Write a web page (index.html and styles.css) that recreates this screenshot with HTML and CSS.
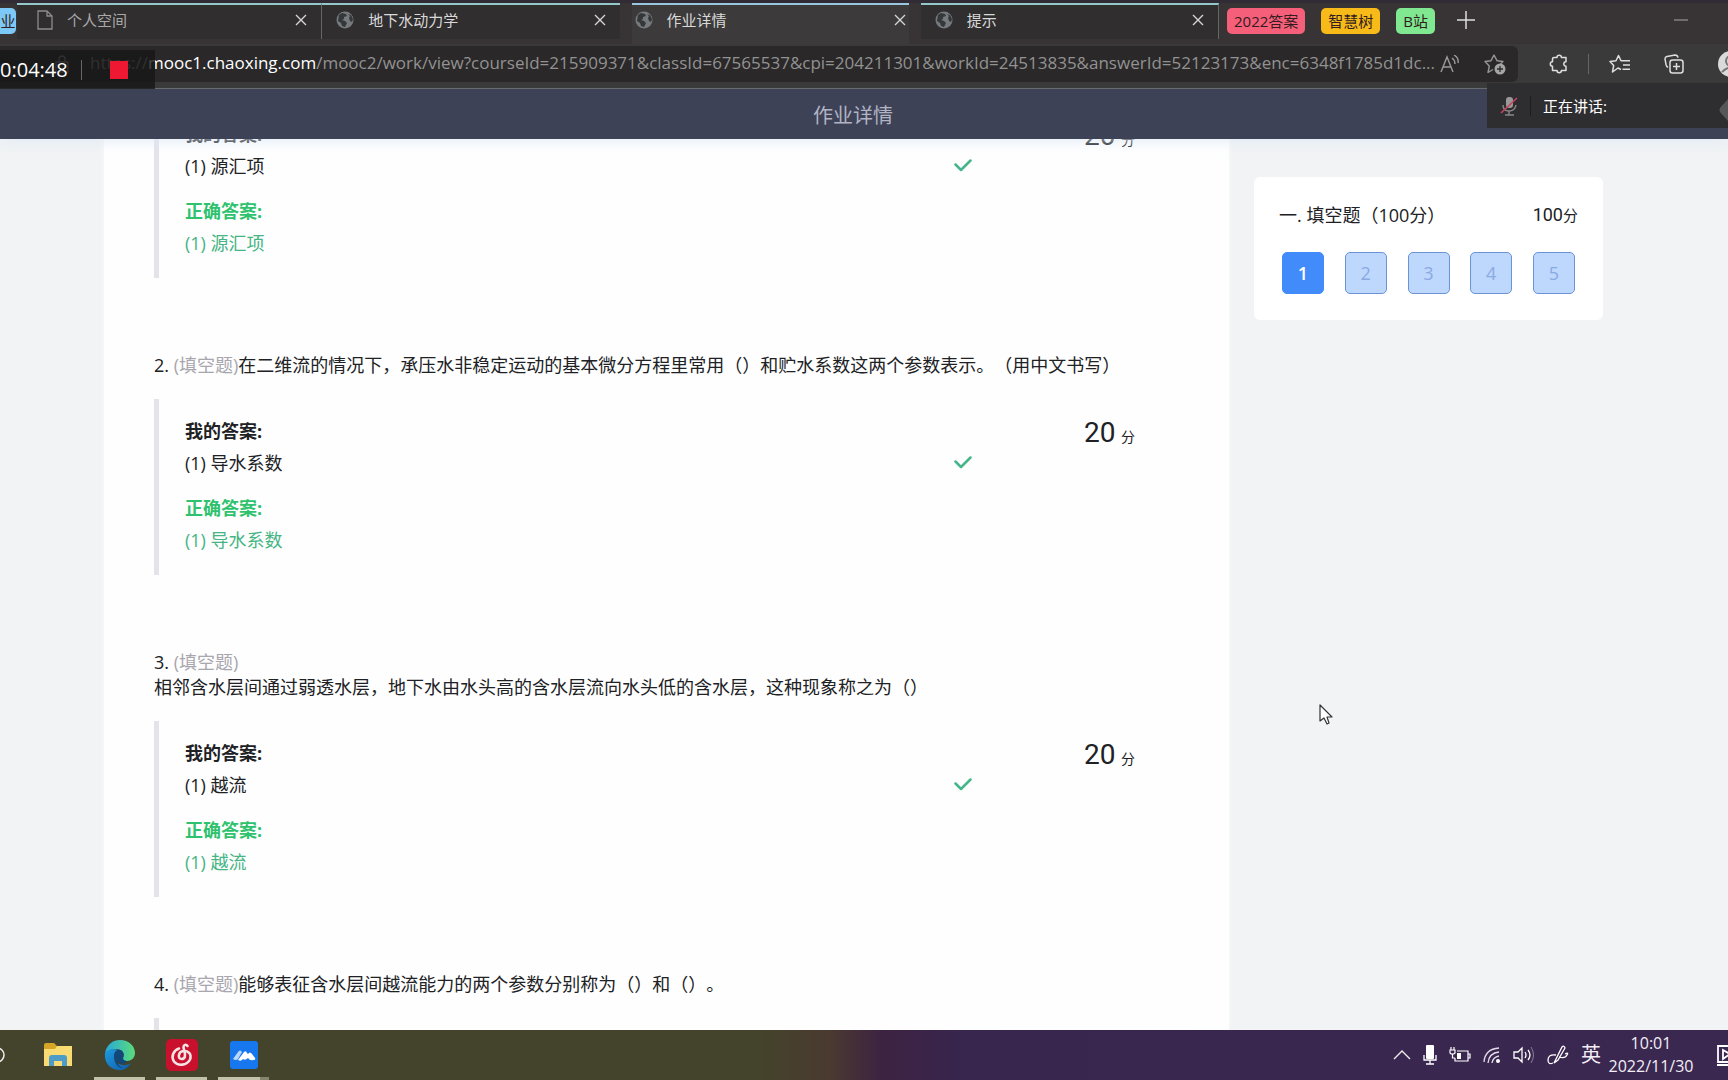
FILE: index.html
```html
<!DOCTYPE html>
<html lang="zh-CN">
<head>
<meta charset="utf-8">
<title>作业详情</title>
<meta name="viewport" content="width=device-width, initial-scale=1">
<link rel="stylesheet" href="styles.css">
</head>
<body>
<svg class="defs" aria-hidden="true">
  <symbol id="globe" viewBox="0 0 18 18"><circle cx="9" cy="9" r="8.5" fill="#777a7c"/><path d="M3 4l3-2 4 1 1 2-3 1v2l-2 1 3 1 2 2-2 4-3-1-1-3-3-2zM12 3l3 1 2 4-1 3-2-1-1-3 1-2z" fill="#35383a"/></symbol>
  <symbol id="close" viewBox="0 0 12 12"><path d="M1 1l10 10M11 1L1 11" stroke="#d6d6d6" stroke-width="1.4" fill="none"/></symbol>
  <symbol id="check" viewBox="0 0 18 13"><path d="M1.5 5.5l5.500 5.500L16.500 1.500" stroke="#45b58a" stroke-width="2.500" fill="none" stroke-linecap="round" stroke-linejoin="round"/></symbol>
</svg>

<div class="browser">
  <div class="tabs">
    <button class="group group-blue">业</button>
    <div class="tab tab-first">
      <svg class="icon-page" viewBox="0 0 16 20"><path d="M1 1h9l5 5v13H1zM10 1v5h5" fill="none" stroke="#8b8d8d" stroke-width="1.300"/></svg>
      <span class="tab-title dim">个人空间</span>
      <button class="tab-close" aria-label="关闭"><svg><use href="#close"/></svg></button>
    </div>
    <div class="tab tab-second">
      <svg class="icon-globe"><use href="#globe"/></svg>
      <span class="tab-title">地下水动力学</span>
      <button class="tab-close" aria-label="关闭"><svg><use href="#close"/></svg></button>
    </div>
    <div class="tab tab-active">
      <svg class="icon-globe"><use href="#globe"/></svg>
      <span class="tab-title">作业详情</span>
      <button class="tab-close" aria-label="关闭"><svg><use href="#close"/></svg></button>
    </div>
    <div class="tab tab-last">
      <svg class="icon-globe"><use href="#globe"/></svg>
      <span class="tab-title">提示</span>
      <button class="tab-close" aria-label="关闭"><svg><use href="#close"/></svg></button>
    </div>
    <button class="group group-red">2022答案</button>
    <button class="group group-yellow">智慧树</button>
    <button class="group group-green">B站</button>
    <button class="bare new-tab" aria-label="新建标签页"><svg viewBox="0 0 18 18" width="18" height="18"><path d="M9 0v18M0 9h18" stroke="#dedede" stroke-width="1.500"/></svg></button>
    <button class="bare minimize" aria-label="最小化"><svg viewBox="0 0 14 2" width="14" height="2"><path d="M0 1h14" stroke="#a5a5a5"/></svg></button>
  </div>

  <div class="toolbar">
    <div class="address">
      <svg class="lock" viewBox="0 0 16 18" width="16" height="18"><path d="M2 7h12v10H2zM5 7V4a3 3 0 0 1 6 0v3" fill="none" stroke="#999" stroke-width="1.300"/></svg>
      <span class="url">https://<b>mooc1.chaoxing.com</b>/mooc2/work/view?courseId=215909371&amp;classId=67565537&amp;cpi=204211301&amp;workId=24513835&amp;answerId=52123173&amp;enc=6348f1785d1dc...</span>
      <button class="bare read" aria-label="朗读"><svg viewBox="0 0 20 18" width="20" height="18"><path d="M1 17L7 2l6 15M3 12h8M12 3q3 2 3 6M14 0q5 3 4 8" fill="none" stroke="#9b9b9b" stroke-width="1.400"/></svg></button>
      <button class="bare" aria-label="收藏"><svg viewBox="0 0 22 22" width="22" height="22"><path d="M9 16.500L4 19.500 5.300 13 1 8.500l6-.8L10 2l3 5.700 6 .8-2.500 2.500" fill="none" stroke="#969696" stroke-width="1.400" stroke-linejoin="round"/><circle cx="16" cy="16" r="5.500" fill="#a5a5a5"/><path d="M16 13v6M13 16h6" stroke="#2b2b2b" stroke-width="1.300"/></svg></button>
    </div>
    <div class="tools">
      <button class="bare" aria-label="扩展"><svg viewBox="0 0 20 20" width="20" height="20"><path d="M5 3.500h3a2.200 2.200 0 0 1 4.400 0H17v4.300a2.200 2.200 0 0 0 0 4.400v4.300h-4.600a2.200 2.200 0 0 1-4.400 0H3.500v-4.300a2.200 2.200 0 0 1 0-4.400V5q0-1.500 1.500-1.500z" fill="none" stroke="#dedede" stroke-width="1.500" stroke-linejoin="round"/></svg></button>
      <i class="rule"></i>
      <button class="bare favorites" aria-label="收藏夹"><svg viewBox="0 0 22 20" width="22" height="20"><path d="M12 15.500l-3-1.500-5.500 4 1.200-6.500L1 7.500l6-.8L9.500 1.500 12 6.700h9M14 11h7M13.500 15.300h7.500" fill="none" stroke="#dedede" stroke-width="1.500" stroke-linejoin="round"/></svg></button>
      <button class="bare" aria-label="集锦"><svg viewBox="0 0 20 20" width="20" height="20"><rect x="6" y="6" width="13" height="13" rx="2.500" fill="none" stroke="#dedede" stroke-width="1.500"/><path d="M4 13.500q-1.500-1-2-3L1 5q0-2 2-2.400l8-1.500q2.500 0 3 2.500M12.500 9v7M9 12.500h7" fill="none" stroke="#dedede" stroke-width="1.500"/></svg></button>
      <button class="bare avatar" aria-label="用户"><svg viewBox="0 0 26 26" width="26" height="26"><circle cx="13" cy="13" r="13" fill="#dadada"/><circle cx="13" cy="10" r="5" fill="none" stroke="#777" stroke-width="2"/><path d="M4 21q9-9 18 0" fill="none" stroke="#777" stroke-width="2"/></svg></button>
    </div>
  </div>
</div>

<header class="page-header"><h1>作业详情</h1></header>

<main class="page">
  <section class="paper">
    <article class="question">
      <div class="answer">
        <dl>
          <dt>我的答案:</dt><dd>(1) 源汇项</dd>
          <dt class="right">正确答案:</dt><dd class="right">(1) 源汇项</dd>
        </dl>
        <svg class="check"><use href="#check"/></svg>
        <p class="score"><b>20</b> 分</p>
      </div>
    </article>
    <article class="question">
      <h2>2. <span>(填空题)</span>在二维流的情况下，承压水非稳定运动的基本微分方程里常用（）和贮水系数这两个参数表示。（用中文书写）</h2>
      <div class="answer">
        <dl>
          <dt>我的答案:</dt><dd>(1) 导水系数</dd>
          <dt class="right">正确答案:</dt><dd class="right">(1) 导水系数</dd>
        </dl>
        <svg class="check"><use href="#check"/></svg>
        <p class="score"><b>20</b> 分</p>
      </div>
    </article>
    <article class="question">
      <h2>3. <span>(填空题)</span><br>相邻含水层间通过弱透水层，地下水由水头高的含水层流向水头低的含水层，这种现象称之为（）</h2>
      <div class="answer">
        <dl>
          <dt>我的答案:</dt><dd>(1) 越流</dd>
          <dt class="right">正确答案:</dt><dd class="right">(1) 越流</dd>
        </dl>
        <svg class="check"><use href="#check"/></svg>
        <p class="score"><b>20</b> 分</p>
      </div>
    </article>
    <article class="question">
      <h2>4. <span>(填空题)</span>能够表征含水层间越流能力的两个参数分别称为（）和（）。</h2>
      <div class="answer"></div>
    </article>
  </section>

  <aside class="card">
    <div class="card-head"><span>一. 填空题（100分）</span><span class="total"><b>100</b>分</span></div>
    <nav class="numbers">
      <button class="on">1</button><button>2</button><button>3</button><button>4</button><button>5</button>
    </nav>
  </aside>
</main>

<footer class="taskbar">
  <div class="apps">
    <button class="bare search" aria-label="搜索"><svg viewBox="0 0 16 16" width="16" height="16"><circle cx="8" cy="8" r="7" fill="none" stroke="#eee" stroke-width="1.500"/></svg></button>
    <button class="app" aria-label="文件资源管理器"><svg viewBox="0 0 30 26" width="30" height="26"><path d="M1 3q0-2 2-2h8l3 3h14q1 0 1 2v18H1z" fill="#d6a526"/><path d="M1 7h11l2-3h15v20H1z" fill="#f8dc73"/><path d="M6 24v-8q0-3 3-3h12q3 0 3 3v8h-5v-5h-8v5z" fill="#4d9cc8"/></svg></button>
    <button class="app open" aria-label="Edge"><svg viewBox="0 0 32 32" width="32" height="32"><defs><linearGradient id="edge-top" x2="1"><stop stop-color="#27a9dc"/><stop offset="1" stop-color="#5bdb79"/></linearGradient><linearGradient id="edge-low" y2="1"><stop stop-color="#1e9de0"/><stop offset="1" stop-color="#0f5aa6"/></linearGradient></defs><path d="M1 14C3 5 9 1 16 1c9 0 15 6 15 13 0 5-4 8-8 8-3 0-5-1-4-3 3-5-2-9-7-9-5 0-9 2-11 4z" fill="url(#edge-top)"/><path d="M1 14c3-4 9-5 13-3-5 3-5 11 1 14 4 2 9 1 12-1-3 5-8 8-13 7C5 30 0 23 1 14z" fill="url(#edge-low)"/><path d="M10 17c0-4 3-7 6-6 3 0 4 4 3 8 0 2 2 3 4 3-2 3-8 4-9 0-1-2 0-4 0-5-2 3-1 10 5 12-6 0-9-6-9-12z" fill="#11477c"/></svg></button>
    <button class="app open" aria-label="网易云音乐"><svg viewBox="0 0 32 32" width="32" height="32"><rect width="32" height="32" rx="5" fill="#c9102c"/><path d="M13 9.500C7 11.500 5 18 8 22.500c4 5 13 4 16-2 2-6-2-9-7-8.500-5 1-5.500 8-1.500 8s4-4 3-7.500l-1-4c0-3 2.500-3.500 4-1.500" fill="none" stroke="#f5e3e5" stroke-width="2.600" stroke-linecap="round"/></svg></button>
    <button class="app open stacked" aria-label="腾讯会议"><svg viewBox="0 0 28 28" width="28" height="28"><rect width="28" height="28" rx="3" fill="#1777ee"/><path d="M3 18l5-7q2-3 4 0l-4 7q-2 2-5 0z" fill="#b8d7ff"/><path d="M8 19l6-8q2-2 3 1l1 1q2-3 4 0l3 4q1 2-2 2-3 1-5-2-3 3-5 1-2 3-5 1z" fill="#fff"/></svg></button>
  </div>
  <div class="tray">
    <svg viewBox="0 0 18 10" width="18" height="10"><path d="M1 9l8-8 8 8" fill="none" stroke="#eee" stroke-width="1.400"/></svg>
    <svg viewBox="0 0 14 20" width="14" height="20"><rect x="3" width="8" height="14" rx="1" fill="#fff"/><path d="M1 10v5h12v-5M7 15v4M3 19h8" fill="none" stroke="#fff" stroke-width="1.300"/></svg>
    <svg viewBox="0 0 22 16" width="22" height="16"><path d="M8 4h11v10H6v-3M19.500 7h1.500v4h-1.500M2 0v3M5 0v3M1 3h5v2.500Q6 7 3.500 7T1 5.500zM3.500 7v4H6" fill="none" stroke="#fff" stroke-width="1.200"/><path d="M8 6h4v6H8z" fill="#fff"/></svg>
    <svg viewBox="0 0 18 18" width="18" height="18"><path d="M1 16Q2 3 16 2M5 17Q6 7 16 6M9 17q1-6 7-7" fill="none" stroke="#e4dde9" stroke-width="1.300"/><circle cx="15" cy="15" r="2" fill="#fff"/></svg>
    <svg viewBox="0 0 22 18" width="22" height="18"><path d="M1 6h4l4-4v14l-4-4H1zM12 6q2 3 0 6M15 4q4 5 0 10" fill="none" stroke="#fff" stroke-width="1.300"/><path d="M18 1q5 8 0 16" fill="none" stroke="#897c98"/></svg>
    <svg viewBox="0 0 22 20" width="22" height="20"><path d="M8 16L15 2q2-2 3 1L11 15l-4 3zM12 12q6 2 8-2 2-3-2-1M9 10q-8-1-8 5 0 5 5 3" fill="none" stroke="#fff" stroke-width="1.300"/></svg>
    <span class="ime">英</span>
    <div class="clock"><time>10:01</time><time>2022/11/30</time></div>
    <svg viewBox="0 0 24 22" width="24" height="22"><path d="M1 2h22v16H1zM0 21h24M6 6l7 4-7 5z" fill="none" stroke="#fff" stroke-width="1.800"/></svg>
  </div>
</footer>

<div class="recorder"><time>0:04:48</time><i class="rule"></i><button class="stop" aria-label="停止"></button></div>
<div class="speaking">
  <svg viewBox="0 0 18 20" width="18" height="20"><rect x="6" y="1" width="7" height="11" rx="3" fill="#999"/><path d="M3 9q0 6 6 6t7-6M9 15v4M5 19h9" fill="none" stroke="#888" stroke-width="1.400"/><path d="M1 17L17 2" stroke="#c9425f" stroke-width="1.600"/></svg>
  <i class="rule"></i><span>正在讲话:</span>
  <svg class="handle" viewBox="0 0 9 22" width="9" height="22"><path d="M9 0L1 9q-1 2 0 4l8 9z" fill="#555859"/></svg>
</div>
<svg class="cursor" viewBox="0 0 14 21" width="14" height="21"><path d="M1 1v16l4-3 3 6 2-1-2-6h5z" fill="#fff" stroke="#333" stroke-width="1.200" stroke-linejoin="round"/></svg>
</body>
</html>
```
FILE: styles.css
```css
* { box-sizing: border-box; }

body {
  margin: 0;
  height: 100vh;
  display: flex;
  flex-direction: column;
  overflow: hidden;
  position: relative;
  background: #f1f3f4;
  color: #202124;
  font-family: "Open Sans", "Noto Sans CJK SC", sans-serif;
  font-size: 18px;
  text-spacing-trim: space-all;
}

h1, h2, p, dl, dd { margin: 0; font-weight: 400; }
button { font: inherit; padding: 0; border: 0; color: inherit; }
svg { display: block; flex: none; }
.defs { position: absolute; width: 0; height: 0; }
.bare { background: none; display: flex; align-items: center; flex: none; }
.rule { width: 1px; height: 20px; background: #666; flex: none; }

/* browser frame */
.browser {
  flex: none;
  position: relative;
  z-index: 1;
  background: #3b3a3b;
  border-bottom: 1px solid #686b70;
}
.tabs {
  display: flex;
  align-items: flex-start;
  height: 44px;
  padding-top: 3px;
  background: linear-gradient(#302b35 0 3px, #383435 3px);
  font-size: 15px;
}
.tab {
  display: flex;
  align-items: center;
  min-width: 0;
  height: 36px;
  padding: 0 14px 4px;
  border-top: 2px solid #94c8cb;
  background: #302e2f;
  color: #d9d9d9;
}
.tab-first { flex: 1 1 305px; padding-left: 20px; margin-left: 1px; border-right: 1px solid #666; }
.tab-second { flex: 1 1 297px; }
.tab-active { flex: 1 1 277px; height: 41px; padding: 0 3px 9px; margin: 0 12px; background: #3c3a3b; border-color: #9ac7df; }
.tab-last { flex: 1 1 298px; margin-right: 8px; border-right: 1px solid #666; }
.tab-title { flex: 1; margin-left: 14px; line-height: 20px; }
.dim { color: #a9a9a9; }
.icon-page { width: 16px; height: 20px; }
.icon-globe { width: 18px; height: 18px; }
.tab-close { width: 12px; height: 12px; background: none; }
.tab-close svg { width: 12px; height: 12px; }
.group {
  flex: none;
  height: 26px;
  margin: 5px 16px 0 0;
  padding: 0 7px;
  border-radius: 5px;
  line-height: 24px;
  color: #321c20;
}
.group-blue { width: 16px; margin-right: 0; padding: 0; background: #7cc8f7; border-radius: 0 5px 5px 0; direction: rtl; overflow: hidden; }
.group-red { background: #f65f79; }
.group-yellow { background: #f7ba18; }
.group-green { background: #7fe890; }
.new-tab { margin: 8px 0 0 6px; }
.minimize { margin: 16px 40px 0 199px; }

.toolbar { display: flex; align-items: center; height: 44px; padding-bottom: 4px; }
.address {
  flex: 1;
  min-width: 0;
  display: flex;
  align-items: center;
  height: 36px;
  padding: 0 12px 0 54px;
  border-radius: 0 6px 6px 0;
  background: #2a2829;
  color: #929292;
}
.url { flex: 1; min-width: 0; margin-left: 20px; font-size: 17px; line-height: 22px; padding-bottom: 2px; white-space: nowrap; }
.url b { font-weight: 400; color: #fff; }
.read { margin: 0 24px 0 16px; }
.tools { flex: none; display: flex; align-items: center; width: 210px; padding-left: 31px; gap: 19px; overflow: hidden; }
.tools .rule { margin-right: 1px; }
.favorites { margin-right: 14px; }
.tools .avatar { margin-left: 15px; }

/* page */
.page-header {
  flex: none;
  height: 50px;
  padding-top: 2px;
  background: #3d4257;
  text-align: center;
  color: #b2b4c4;
  position: relative;
  box-shadow: 0 0 16px #dce8f6;
}
.page-header h1 { font-size: 20px; line-height: 50px; padding-right: 22px; }
.page {
  flex: 1;
  min-height: 0;
  display: flex;
  align-items: flex-start;
  gap: 25px;
  padding: 0 125px 0 104px;
  overflow: hidden;
}
.paper {
  flex: 1;
  margin-top: -37px;
  padding: 0 63px 0 50px;
  background: #fefefe;
  box-shadow: 0 0 6px #f8fafb;
}
.question { margin-bottom: 75px; }
.question h2 { font-size: 18px; line-height: 25px; margin-bottom: 21px; white-space: nowrap; }
.question h2 span { color: #a8a6ae; }
.answer {
  display: flex;
  height: 176px;
  padding: 16px 31px 0 26px;
  border-left: 5px solid #e4e3ea;
}
dl { flex: 1; line-height: 32px; }
dt { font-weight: 700; }
dd + dt { margin-top: 13px; }
dt.right { color: #2fc26e; }
dd.right { color: #45b584; }
.check { width: 18px; height: 13px; margin: 41px 112px 0 0; }
.score { width: 51px; font-size: 14px; line-height: 36px; white-space: nowrap; }
.score b { font: 400 28px/36px Roboto, sans-serif; margin-right: 2px; }

.card {
  width: 349px;
  margin-top: 38px;
  padding: 22px 25px 26px;
  border-radius: 6px;
  background: #fff;
}
.card-head { display: flex; justify-content: space-between; line-height: 32px; margin-bottom: 21px; }
.total { font-size: 15px; }
.total b { font-weight: 400; font-size: 18px; font-family: Roboto, sans-serif; }
.numbers { display: flex; justify-content: space-between; padding: 0 3px; }
.numbers button {
  width: 42px;
  height: 42px;
  border: 1px solid #6b93d6;
  border-radius: 5px;
  background: #bed7fd;
  color: #8aaae2;
}
.numbers .on { background: #428bfa; border-color: #428bfa; color: #fff; font-weight: 600; }

/* taskbar */
.taskbar {
  flex: none;
  display: flex;
  justify-content: space-between;
  height: 50px;
  background: linear-gradient(90deg, #44432b 0 44%, #4a3a30 48%, #3d2341 51%, #38264f 56%, #3b2851);
  color: #f3eef6;
  overflow: hidden;
}
.apps { display: flex; gap: 11px; }
.search { width: 22px; margin: 0 10px 0 -11px; }
.app {
  display: flex;
  align-items: center;
  justify-content: center;
  width: 51px;
  padding-top: 3px;
  background: none;
  border-bottom: 3px solid transparent;
}
.open { border-color: #c2c1a9; }
.stacked { border-image: linear-gradient(90deg, #c2c1a9 78%, #85846c 78%) 3; }
.tray { display: flex; align-items: center; gap: 12px; margin-right: -13px; flex: none; }
.ime { font-size: 20px; line-height: 24px; }
.clock { display: flex; flex-direction: column; align-items: center; width: 86px; margin: 0 11px 0 -5px; font-size: 16px; line-height: 23px; }

/* floating windows of the recorder and the meeting */
.recorder {
  position: absolute;
  z-index: 2;
  left: 0;
  top: 50px;
  width: 155px;
  height: 39px;
  display: flex;
  align-items: center;
  gap: 13px;
  background: rgba(24, 22, 23, 0.8);
  color: #fff;
  font-size: 20px;
}
.stop { width: 18px; height: 18px; margin-left: 15px; background: #ee1832; }
.speaking {
  position: absolute;
  z-index: 2;
  right: 0;
  top: 83px;
  width: 241px;
  height: 45px;
  display: flex;
  align-items: center;
  gap: 12px;
  padding-left: 13px;
  background: #2e2e30;
  color: #fff;
  font-size: 15px;
}
.speaking .rule { background: #1c1d1e; }
.handle { margin: 8px 0 0 auto; }
.cursor { position: absolute; left: 1319px; top: 704px; }
```
